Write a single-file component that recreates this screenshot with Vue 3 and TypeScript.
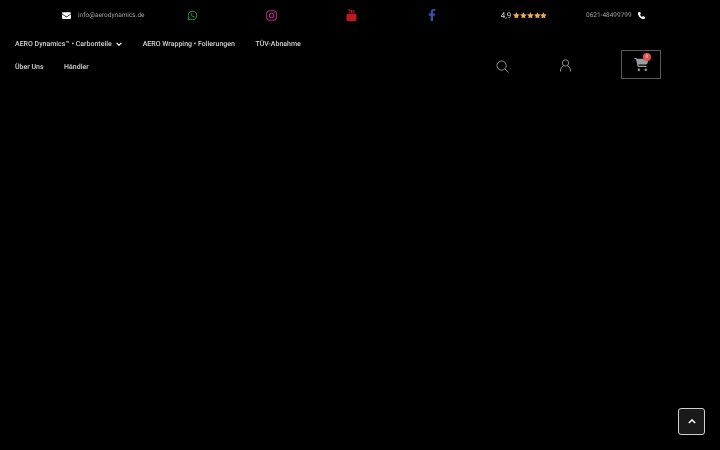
<template>
  <div class="page">
    <header class="header">
      <div class="topbar">
        <a class="mail">
          <svg class="mail-icon" viewBox="0 0 512 384">
            <path d="M48 0C21.500 0 0 21.500 0 48c0 15 7 29.200 19 38.400l217 162.800c11.400 8.500 27 8.500 38.400 0L491 86.400C503 77.200 512 63 512 48c0-26.500-21.500-48-48-48H48zM0 118v218c0 26.500 21.500 48 48 48h416c26.500 0 48-21.500 48-48V118L293.600 282c-22.800 17-54.400 17-77.200 0L0 118z" fill="#fff" />
          </svg>
          <span>info@aerodynamics.de</span>
        </a>
        <div class="social">
          <svg class="ico-whatsapp" viewBox="0 0 24 24" fill="none" stroke="#25a244" stroke-width="2">
            <path d="M2.500 21.500l1.500-5.300A9.300 9.300 0 1 1 7.800 20z" stroke-linejoin="round" />
            <path d="M8.600 7.800c.5-.9 1.400-.8 1.700-.1l.6 1.500-.8 1.100c.7 1.400 1.900 2.600 3.500 3.300l1.100-1.100 1.600.9c.5.700 0 1.800-1.200 2-3.300.4-7.700-3.700-6.500-7.600z" fill="#25a244" stroke="none" />
          </svg>
        </div>
        <div class="social">
          <svg class="ico-insta shift-left" viewBox="0 0 24 24" fill="none" stroke="#b82f86" stroke-width="2.200">
            <rect x="1.500" y="1.500" width="21" height="21" rx="6" />
            <circle cx="12" cy="12" r="4.800" />
            <circle cx="18" cy="6" r="1.300" fill="#b82f86" stroke="none" />
          </svg>
        </div>
        <div class="social">
          <svg class="ico-youtube shift-left" viewBox="0 0 20 24" fill="#c4161c">
            <path d="M3 0h1.500l1 3 1-3H8L6.200 4.500V8H4.800V4.500zM9.800 2c1.100 0 1.700.6 1.700 1.500v3c0 .9-.6 1.500-1.700 1.500s-1.700-.6-1.700-1.500v-3C8.100 2.600 8.700 2 9.800 2zM12.400 2h1.300v4.500c0 .4.500.3.900-.2V2h1.300v6h-1.300v-.6c-.9 1-2.200.9-2.200-.4z" />
            <path d="M3 9.500h14c1.700 0 3 1.300 3 3V21c0 1.700-1.300 3-3 3H3c-1.700 0-3-1.300-3-3v-8.500c0-1.700 1.300-3 3-3z" />
          </svg>
        </div>
        <div class="social">
          <svg class="ico-facebook" viewBox="0 0 320 512" fill="#3b4fa8">
            <path d="M279 288l14-93h-89v-60c0-25 12-50 52-50h41V6s-37-6-72-6c-73 0-121 44-121 125v70H23v93h81v224h100V288z" />
          </svg>
        </div>
        <div class="rating">
          <span class="score">4,9</span>
          <span class="stars">
            <svg v-for="n in 5" :key="n" class="star" viewBox="0 0 24 24" fill="#e8ac5a">
              <path d="M12 0.500l3.600 7.500 8.200 1.100-6 5.700 1.500 8.200-7.300-4-7.300 4 1.500-8.200-6-5.700 8.200-1.100z" />
            </svg>
          </span>
        </div>
        <div class="phone">
          <span>0621-48499799</span>
          <svg class="phone-icon" viewBox="0 0 512 512" fill="#fff">
            <path d="M164 24c-8-19-29-29-49-24L27 24C10 29-2 45 0 64c0 247 201 448 448 448 18 0 34-12 39-30l24-88c5-20-5-41-24-49l-96-40c-16-7-35-2-46 12l-40 49c-70-33-127-90-160-160l49-40c14-11 19-30 12-46z" />
          </svg>
        </div>
      </div>

      <div class="mainbar">
        <nav class="nav">
          <a class="nav-item">
            AERO Dynamics™ • Carbonteile
            <svg class="chevron" viewBox="0 0 10 6" fill="none" stroke="#fff" stroke-width="2">
              <path d="M1 1l4 4 4-4" />
            </svg>
          </a>
          <a class="nav-item">AERO Wrapping • Folierungen</a>
          <a class="nav-item">TÜV-Abnahme</a>
          <a class="nav-item">Über Uns</a>
          <a class="nav-item">Händler</a>
        </nav>
        <div class="tools">
          <svg class="ico-search" viewBox="0 0 14 14" fill="none" stroke="#a8a8a8" stroke-width="0.900">
            <circle cx="6" cy="6" r="5" />
            <path d="M9.700 9.700l3.600 3.800" />
          </svg>
          <svg class="ico-user" viewBox="0 0 14 14" fill="none" stroke="#a8a8a8" stroke-width="0.900">
            <circle cx="7" cy="4.200" r="3.400" />
            <path d="M1.500 13.500c0-4 2-5.800 3.500-6.200M12.500 13.500c0-4-2-5.800-3.500-6.200" />
          </svg>
          <div class="cart">
            <svg class="ico-cart" viewBox="0 0 576 512" fill="#9a9ea4">
              <path d="M0 24C0 11 11 0 24 0h45c22 0 42 13 50 32h411c21 0 36 20 31 40l-41 144c-7 25-29 40-54 40H172l9 48h287c13 0 24 11 24 24s-11 24-24 24H161c-12 0-22-8-24-20L72 54c-1-3-3-6-6-6H24C11 48 0 37 0 24z" />
              <circle cx="184" cy="464" r="48" />
              <circle cx="456" cy="464" r="48" />
            </svg>
            <span class="badge">0</span>
          </div>
        </div>
      </div>
    </header>

    <button class="to-top">
      <svg viewBox="0 0 10 6" fill="none" stroke="#fff" stroke-width="1.800">
        <path d="M1 5l4-4 4 4" />
      </svg>
    </button>
  </div>
</template>

<script setup lang="ts">
// static header, nothing to wire up
</script>

<style>
html,
body {
  margin: 0;
  background: #000;
}
</style>

<style scoped>
.page {
  position: relative;
  width: 720px;
  height: 450px;
  overflow: hidden;
  background: #000;
  font-family: Roboto, "Liberation Sans", sans-serif;
  color: #fff;
}

/* own layer, so the small text gets greyscale antialiasing */
.header {
  will-change: transform;
  text-rendering: geometricPrecision;
}

.topbar {
  display: grid;
  grid-template-columns: 90px 80px 80px 80px 80px 104px auto;
  align-items: center;
  height: 30px;
  padding-left: 62px;
}

.mail {
  display: flex;
  align-items: center;
  gap: 7px;
  font-size: 6.500px;
  color: #a4a4a4;
  white-space: nowrap;
}

.mail-icon {
  width: 9px;
  height: 7px;
}

.social {
  display: flex;
  justify-content: center;
  align-items: center;
}

.ico-whatsapp,
.ico-insta {
  width: 11px;
  height: 11px;
}

.ico-youtube {
  width: 11px;
  height: 12px;
}

.ico-facebook {
  width: 8px;
  height: 12px;
}

.shift-left {
  margin-right: 1px;
}

.rating {
  display: flex;
  justify-content: center;
  align-items: center;
  gap: 2px;
  font-size: 8px;
  color: #d0d0d0;
}

.stars {
  display: flex;
}

.star {
  width: 6.800px;
  height: 6.800px;
}

.phone {
  display: flex;
  align-items: center;
  gap: 6px;
  padding-left: 10px;
  font-size: 6.500px;
  color: #a4a4a4;
  white-space: nowrap;
}

.phone-icon {
  width: 7px;
  height: 7px;
}

.mainbar {
  display: flex;
  align-items: flex-start;
  padding-top: 2px;
}

.nav {
  display: flex;
  flex-wrap: wrap;
  column-gap: 20.500px;
  width: 330px;
  padding-left: 15px;
  box-sizing: border-box;
}

.nav-item {
  display: flex;
  align-items: center;
  height: 23px;
  font-size: 7px;
  font-weight: 500;
  color: #d4d4d4;
  white-space: nowrap;
}

.chevron {
  width: 6px;
  height: 4px;
  margin-left: 4.500px;
}

.tools {
  flex: 1;
  display: flex;
  align-items: center;
  height: 28px;
  margin-top: 18px;
}

.ico-search {
  width: 13px;
  height: 13px;
  margin-top: 5px;
  margin-left: 166px;
}

.ico-user {
  width: 13px;
  height: 13px;
  margin-top: 2px;
  margin-left: 50px;
}

.cart {
  position: relative;
  display: flex;
  justify-content: center;
  align-items: center;
  box-sizing: border-box;
  width: 40px;
  height: 29px;
  margin-left: 49px;
  border: 1px solid #5a5a5a;
}

.ico-cart {
  width: 15px;
  height: 13px;
}

.badge {
  position: absolute;
  top: 2px;
  left: 21px;
  width: 8px;
  height: 8px;
  border-radius: 50%;
  background: #e2504f;
  font-size: 5px;
  line-height: 8px;
  text-align: center;
  color: #f3d0d0;
}

.to-top {
  position: absolute;
  top: 408px;
  left: 678px;
  display: flex;
  justify-content: center;
  align-items: center;
  box-sizing: border-box;
  width: 27px;
  height: 27px;
  padding: 0;
  border: 1px solid #cfcfcf;
  border-radius: 3px;
  background: #1a1a1a;
}

.to-top svg {
  width: 8px;
  height: 5px;
}
</style>
